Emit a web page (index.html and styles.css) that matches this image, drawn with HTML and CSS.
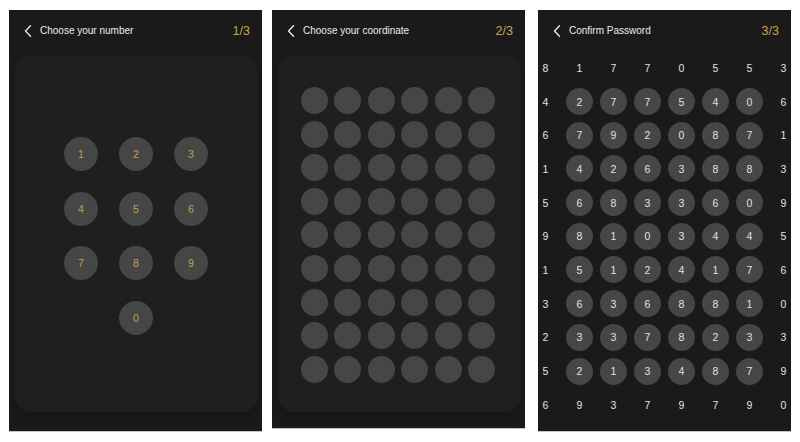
FILE: index.html
```html
<!DOCTYPE html>
<html>
<head>
<meta charset="utf-8">
<link rel="stylesheet" href="styles.css">
</head>
<body>
<div class="screens">
  <section class="phone p1">
    <header class="bar">
      <svg class="back" width="8" height="12" viewBox="0 0 8 12"><polyline points="6.5,0.8 1.5,6 6.5,11.2" fill="none" stroke="#e6e6e6" stroke-width="1.4" stroke-linecap="round" stroke-linejoin="round"/></svg>
      <span class="title">Choose your number</span>
      <span class="step">1/3</span>
    </header>
    <div class="card">
      <div class="keypad">
        <div class="key">1</div><div class="key">2</div><div class="key">3</div>
        <div class="key">4</div><div class="key">5</div><div class="key">6</div>
        <div class="key">7</div><div class="key">8</div><div class="key">9</div>
        <div class="key zero">0</div>
      </div>
    </div>
  </section>

  <section class="phone p2">
    <header class="bar">
      <svg class="back" width="8" height="12" viewBox="0 0 8 12"><polyline points="6.5,0.8 1.5,6 6.5,11.2" fill="none" stroke="#e6e6e6" stroke-width="1.4" stroke-linecap="round" stroke-linejoin="round"/></svg>
      <span class="title">Choose your coordinate</span>
      <span class="step">2/3</span>
    </header>
    <div class="card">
      <div class="dots" id="dots"></div>
    </div>
  </section>

  <section class="phone p3">
    <header class="bar">
      <svg class="back" width="8" height="12" viewBox="0 0 8 12"><polyline points="6.5,0.8 1.5,6 6.5,11.2" fill="none" stroke="#e6e6e6" stroke-width="1.4" stroke-linecap="round" stroke-linejoin="round"/></svg>
      <span class="title">Confirm Password</span>
      <span class="step">3/3</span>
    </header>
    <div class="matrix" id="matrix"></div>
  </section>
</div>
<script src="app.js"></script>
</body>
</html>
```

FILE: styles.css
```css
html, body {
  margin: 0;
  padding: 0;
  background: #ffffff;
  font-family: "Liberation Sans", Arial, sans-serif;
}
.screens {
  display: flex;
  align-items: flex-start;
  padding: 10px 0 0 9px;
  width: 800px;
  height: 442px;
  box-sizing: border-box;
}
.phone {
  width: 253px;
  height: 421px;
  background: #1a1a1a;
  display: flex;
  flex-direction: column;
  overflow: hidden;
  box-shadow: 0 1px 0 #c4c4c4;
}
.p2 {
  margin-left: 10px;
  height: 418px;
}
.p3 {
  margin-left: 13px;
}
.bar {
  height: 45px;
  flex: none;
  display: flex;
  align-items: center;
  padding: 0 12px 0 15px;
  box-sizing: border-box;
  margin-top: -2px;
}
.back {
  display: block;
  margin-right: 8px;
}
.title {
  color: #ececec;
  font-size: 10px;
  flex: 1;
}
.step {
  color: #c9a24c;
  font-size: 12.5px;
}
.card {
  flex: none;
  height: 357px;
  margin: 2px 4px 0 6px;
  background: #1f1f1f;
  border-radius: 16px;
  box-shadow: 0 6px 10px rgba(0,0,0,0.18);
}
.keypad {
  display: grid;
  grid-template-columns: repeat(3, 34px);
  grid-auto-rows: 34px;
  column-gap: 21px;
  row-gap: 20.5px;
  justify-content: center;
  padding-top: 82px;
  margin-left: -1px;
}
.key {
  width: 34px;
  height: 34px;
  border-radius: 50%;
  background: #464646;
  color: #c4a04e;
  font-size: 10.5px;
  display: flex;
  align-items: center;
  justify-content: center;
}
.key.zero {
  grid-column: 2;
}
.dots {
  display: grid;
  grid-template-columns: repeat(6, 27px);
  grid-auto-rows: 27px;
  column-gap: 6.6px;
  row-gap: 6.6px;
  justify-content: center;
  padding-top: 32px;
  margin-left: -3px;
}
.dot {
  width: 27px;
  height: 27px;
  border-radius: 50%;
  background: #464646;
}
.matrix {
  display: grid;
  grid-template-columns: repeat(8, 34px);
  grid-auto-rows: 33.7px;
  width: 272px;
  margin: -2px 0 0 -9.5px;
}
.cell {
  display: flex;
  align-items: center;
  justify-content: center;
  color: #e2e2e2;
  font-size: 10.5px;
}
.cell.ball span {
  width: 27px;
  height: 27px;
  border-radius: 50%;
  background: #464646;
  display: flex;
  align-items: center;
  justify-content: center;
}
```

FILE: app.js
```js
(function () {
  var dots = document.getElementById('dots');
  for (var i = 0; i < 54; i++) {
    var d = document.createElement('div');
    d.className = 'dot';
    dots.appendChild(d);
  }
  var rows = [
    "81770553",
    "42775406",
    "67920871",
    "14263883",
    "56833609",
    "98103445",
    "15124176",
    "36368810",
    "23378233",
    "52134879",
    "69379790"
  ];
  var m = document.getElementById('matrix');
  for (var r = 0; r < rows.length; r++) {
    for (var c = 0; c < 8; c++) {
      var cell = document.createElement('div');
      var inner = r > 0 && r < rows.length - 1 && c > 0 && c < 7;
      cell.className = inner ? 'cell ball' : 'cell';
      var s = document.createElement('span');
      s.textContent = rows[r].charAt(c);
      cell.appendChild(s);
      m.appendChild(cell);
    }
  }
})();
```
